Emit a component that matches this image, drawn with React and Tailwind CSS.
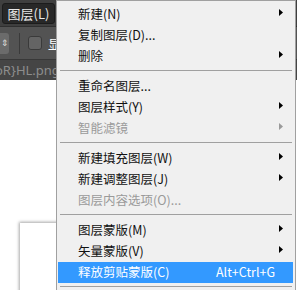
import React from 'react';

const items = [
  { label: '新建(N)', arrow: true },
  { label: '复制图层(D)...' },
  { label: '删除', arrow: true },
  { sep: true },
  { label: '重命名图层...' },
  { label: '图层样式(Y)', arrow: true },
  { label: '智能滤镜', arrow: true, disabled: true },
  { sep: true },
  { label: '新建填充图层(W)', arrow: true },
  { label: '新建调整图层(J)', arrow: true },
  { label: '图层内容选项(O)...', disabled: true },
  { sep: true },
  { label: '图层蒙版(M)', arrow: true },
  { label: '矢量蒙版(V)', arrow: true },
  { label: '释放剪贴蒙版(C)', shortcut: 'Alt+Ctrl+G', active: true },
  { sep: true },
];

function Arrow({ disabled }) {
  return (
    <svg width="4" height="7" viewBox="0 0 4 7" className="absolute right-[10px] top-[5px]">
      <path d="M0 0 L4 3.5 L0 7 Z" fill={disabled ? '#9a9a9a' : '#000'} />
    </svg>
  );
}

function MenuItem({ item }) {
  if (item.sep) {
    return (
      <div className="pt-[3px] pb-[5px] pl-[3px] pr-[3px]">
        <div className="h-px bg-[#a0a0a0]" />
      </div>
    );
  }
  const color = item.active ? 'text-white bg-[#3399ff]' : item.disabled ? 'text-[#9a9a9a]' : 'text-[#111]';
  return (
    <div className={`relative h-[21px] ml-px mr-[2px] flex items-center pl-[20px] ${color}`}>
      <span className="leading-none">{item.label}</span>
      {item.shortcut && (
        <span className="absolute left-[158px] leading-none">{item.shortcut}</span>
      )}
      {item.arrow && <Arrow disabled={item.disabled} />}
    </div>
  );
}

export default function App() {
  return (
    <div
      className="relative w-[297px] h-[290px] overflow-hidden bg-white"
      style={{ fontFamily: '"Noto Sans CJK SC", "Noto Sans", sans-serif' }}
    >
      {/* menu bar */}
      <div className="h-[26px] bg-[#3f3f3f] flex items-center pl-[2px]">
        <div className="h-[21px] w-[53px] rounded-[3px] bg-[#282828] border border-[#1c1c1c] flex items-center justify-center text-[13px] text-[#e8e8e8] leading-none">
          图层(L)
        </div>
      </div>
      {/* options bar */}
      <div className="h-[33px] bg-[#535353] border-t border-[#2f2f2f] flex items-center">
        <div className="h-[21px] w-[9px] bg-[#6b6b6b] rounded-r-[3px] flex items-center justify-center text-[9px] text-[#ddd]">
          ⇕
        </div>
        <div className="ml-[10px] h-[21px] w-px bg-[#3a3a3a]" />
        <div className="ml-[8px] h-[14px] w-[14px] rounded-[3px] bg-[#646464] border border-[#3a3a3a]" />
        <span className="ml-[6px] text-[13px] text-white leading-none">显</span>
      </div>
      {/* tab row */}
      <div className="h-[21px] bg-[#454545] border-t border-[#383838] flex items-center">
        <span className="-ml-[5px] text-[13px] text-[#8d8d8d] leading-none" style={{ fontFamily: '"Noto Sans", sans-serif' }}>
          oR}HL.png
        </span>
      </div>
      {/* canvas area */}
      <div className="pt-[143px] pl-[20px]">
        <div className="h-[80px] w-[60px] bg-white shadow-[-1px_-1px_3px_rgba(0,0,0,0.35)]" />
      </div>

      {/* dropdown menu */}
      <div className="absolute left-[56px] top-0 w-[240px] h-[300px] bg-[#f0f0f0] border-x border-t border-[#a0a0a0] pt-[3px] text-[12.5px]">
        {items.map((item, i) => (
          <MenuItem key={i} item={item} />
        ))}
      </div>
    </div>
  );
}
